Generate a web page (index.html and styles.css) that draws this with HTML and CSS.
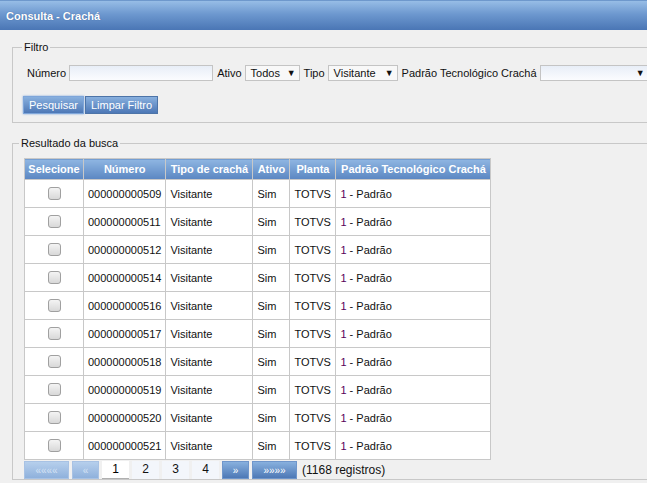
FILE: index.html
```html
<!DOCTYPE html>
<html>
  <head>
    <title>Consulta - Crachá</title>
    <link rel="stylesheet" href="styles.css">
  </head>
  <body>
    <div class="titlebar">Consulta - Crachá</div>

    <fieldset class="box filtro">
      <legend>Filtro</legend>
      <div class="filter-row">
        <label for="numero">Número</label>
        <input type="text" id="numero" class="txt" />
        <label>Ativo</label>
        <span class="sel sel-ativo">Todos <b>&#9660;</b></span>
        <label>Tipo</label>
        <span class="sel sel-tipo">Visitante <b>&#9660;</b></span>
        <label>Padrão Tecnológico Crachá</label>
        <span class="sel sel-padrao"><b>&#9660;</b></span>
      </div>
      <div class="buttons">
        <button class="btn btn-on">Pesquisar</button><button class="btn">Limpar Filtro</button>
      </div>
    </fieldset>

    <fieldset class="box resultado">
      <legend>Resultado da busca</legend>
      <table class="grid">
        <thead>
          <tr>
            <th class="c-sel">Selecione</th>
            <th class="c-num">Número</th>
            <th class="c-tipo">Tipo de crachá</th>
            <th class="c-ativo">Ativo</th>
            <th class="c-planta">Planta</th>
            <th class="c-padrao">Padrão Tecnológico Crachá</th>
          </tr>
        </thead>
        <tbody>
          <tr><td class="chk"><span class="cb"></span></td><td>000000000509</td><td>Visitante</td><td>Sim</td><td>TOTVS</td><td><i>1</i> - Padrão</td></tr>
          <tr><td class="chk"><span class="cb"></span></td><td>000000000511</td><td>Visitante</td><td>Sim</td><td>TOTVS</td><td><i>1</i> - Padrão</td></tr>
          <tr><td class="chk"><span class="cb"></span></td><td>000000000512</td><td>Visitante</td><td>Sim</td><td>TOTVS</td><td><i>1</i> - Padrão</td></tr>
          <tr><td class="chk"><span class="cb"></span></td><td>000000000514</td><td>Visitante</td><td>Sim</td><td>TOTVS</td><td><i>1</i> - Padrão</td></tr>
          <tr><td class="chk"><span class="cb"></span></td><td>000000000516</td><td>Visitante</td><td>Sim</td><td>TOTVS</td><td><i>1</i> - Padrão</td></tr>
          <tr><td class="chk"><span class="cb"></span></td><td>000000000517</td><td>Visitante</td><td>Sim</td><td>TOTVS</td><td><i>1</i> - Padrão</td></tr>
          <tr><td class="chk"><span class="cb"></span></td><td>000000000518</td><td>Visitante</td><td>Sim</td><td>TOTVS</td><td><i>1</i> - Padrão</td></tr>
          <tr><td class="chk"><span class="cb"></span></td><td>000000000519</td><td>Visitante</td><td>Sim</td><td>TOTVS</td><td><i>1</i> - Padrão</td></tr>
          <tr><td class="chk"><span class="cb"></span></td><td>000000000520</td><td>Visitante</td><td>Sim</td><td>TOTVS</td><td><i>1</i> - Padrão</td></tr>
          <tr><td class="chk"><span class="cb"></span></td><td>000000000521</td><td>Visitante</td><td>Sim</td><td>TOTVS</td><td><i>1</i> - Padrão</td></tr>
        </tbody>
      </table>
      <div class="pager">
        <span class="pg pg-off pg-wide">««««</span>
        <span class="pg pg-off">«</span>
        <span class="pg pg-cur">1</span>
        <span class="pg pg-num">2</span>
        <span class="pg pg-num">3</span>
        <span class="pg pg-num">4</span>
        <span class="pg pg-nav">»</span>
        <span class="pg pg-nav pg-wide">»»»»</span>
        <span class="total">(1168 registros)</span>
      </div>
    </fieldset>
  </body>
</html>
```

FILE: styles.css
```css
body {
  margin: 0;
  background-color: #f0f0f0;
  font-family: "Liberation Sans", Arial, sans-serif;
  font-size: 11px;
  color: #111;
  overflow: hidden;
}

.titlebar {
  height: 29px;
  line-height: 31px;
  padding-left: 6px;
  border-top: 1px solid #6e98cc;
  background: linear-gradient(#97bde6, #6d98cf 45%, #4a76b5);
  color: #fff;
  font-weight: bold;
  text-shadow: 0 0 1px #3a5f96;
}

.box {
  border: 1px solid #c8c8c8;
  margin: 0 0 0 12px;
  width: 700px;
  padding: 0 10px 0 14px;
}

.box legend {
  margin-left: -5px;
  padding: 0 2px;
  color: #111;
}

.filtro {
  margin-top: 11px;
  padding-bottom: 8px;
}

.filter-row {
  display: flex;
  align-items: center;
  margin-top: 12px;
  height: 16px;
}

.filter-row label {
  margin-right: 3px;
}

.txt {
  box-sizing: border-box;
  width: 144px;
  height: 16px;
  padding: 1px;
  border: 1px solid #c4c4c4;
  background: linear-gradient(#e8eef7, #fbfcfe);
  margin: 0 4px 0 0;
}

.sel {
  box-sizing: border-box;
  display: flex;
  align-items: center;
  justify-content: space-between;
  height: 16px;
  padding: 0 3px 0 5px;
  margin-right: 4px;
  border: 1px solid #c4c4c4;
  background: #f8f8f8;
}

.sel b {
  font-size: 9px;
  font-weight: normal;
  margin-left: 4px;
}

.sel-ativo {
  width: 55px;
}

.sel-tipo {
  width: 70px;
}

.sel-padrao {
  width: 109px;
  justify-content: flex-end;
  background: linear-gradient(#e8eef7, #fbfcfe);
}

.buttons {
  display: flex;
  margin-top: 15px;
  margin-left: -4px;
}

.btn {
  height: 18px;
  padding: 0 5px;
  border: 1px solid #4d74a8;
  background: linear-gradient(#88b0de, #4d78b6);
  color: #fff;
  font-family: "Liberation Sans", Arial, sans-serif;
  font-size: 11px;
  margin: 0 1px 0 0;
}

.btn-on {
  border-color: #7ea6da;
  box-shadow: 0 0 2px #7ea6da;
}

.resultado {
  margin-top: 14px;
  padding: 0 10px 0 11px;
}

.grid {
  border-collapse: collapse;
  margin-top: 9px;
  background: #fff;
}

.grid th {
  box-sizing: border-box;
  height: 21px;
  padding: 0 3px;
  background: linear-gradient(#8fb6e2, #5a86c2);
  color: #fff;
  font-weight: bold;
  border: 1px solid #c8c8c8;
  white-space: nowrap;
}

.grid td {
  box-sizing: border-box;
  height: 28px;
  padding: 0 4px;
  border: 1px solid #c8c8c8;
  white-space: nowrap;
}

.grid td i {
  font-style: normal;
  color: #5a005a;
}

.c-sel {
  width: 59px;
}

.c-num {
  width: 81px;
}

.c-tipo {
  width: 87px;
}

.c-ativo {
  width: 37px;
}

.c-planta {
  width: 46px;
}

.c-padrao {
  width: 155px;
}

.chk {
  text-align: center;
}

.cb {
  display: inline-block;
  width: 11px;
  height: 11px;
  border: 1px solid #a0a0a0;
  border-radius: 3px;
  background: linear-gradient(#f4f4f4, #d8d8d8);
  vertical-align: middle;
}

.pager {
  display: flex;
  align-items: center;
  gap: 3px;
  margin-top: 0;
  height: 19px;
}

.pg {
  box-sizing: border-box;
  width: 27px;
  height: 18px;
  line-height: 17px;
  text-align: center;
  font-size: 12px;
}

.pg-wide {
  width: 45px;
}

.pg-off {
  background: linear-gradient(#b6cfec, #8fb1dc);
  color: #d4e2f4;
  border: 1px solid #a8c2e4;
  font-size: 10px;
}

.pg-nav {
  background: linear-gradient(#88b0de, #4d78b6);
  color: #fff;
  border: 1px solid #6f96cb;
  font-size: 10px;
}

.pg-cur {
  background: #fff;
  border-bottom: 1px solid #b0b0b0;
  color: #000;
}

.pg-num {
  background: #f3f6fb;
  color: #111;
}

.total {
  margin-left: 2px;
  font-size: 12px;
}
```
